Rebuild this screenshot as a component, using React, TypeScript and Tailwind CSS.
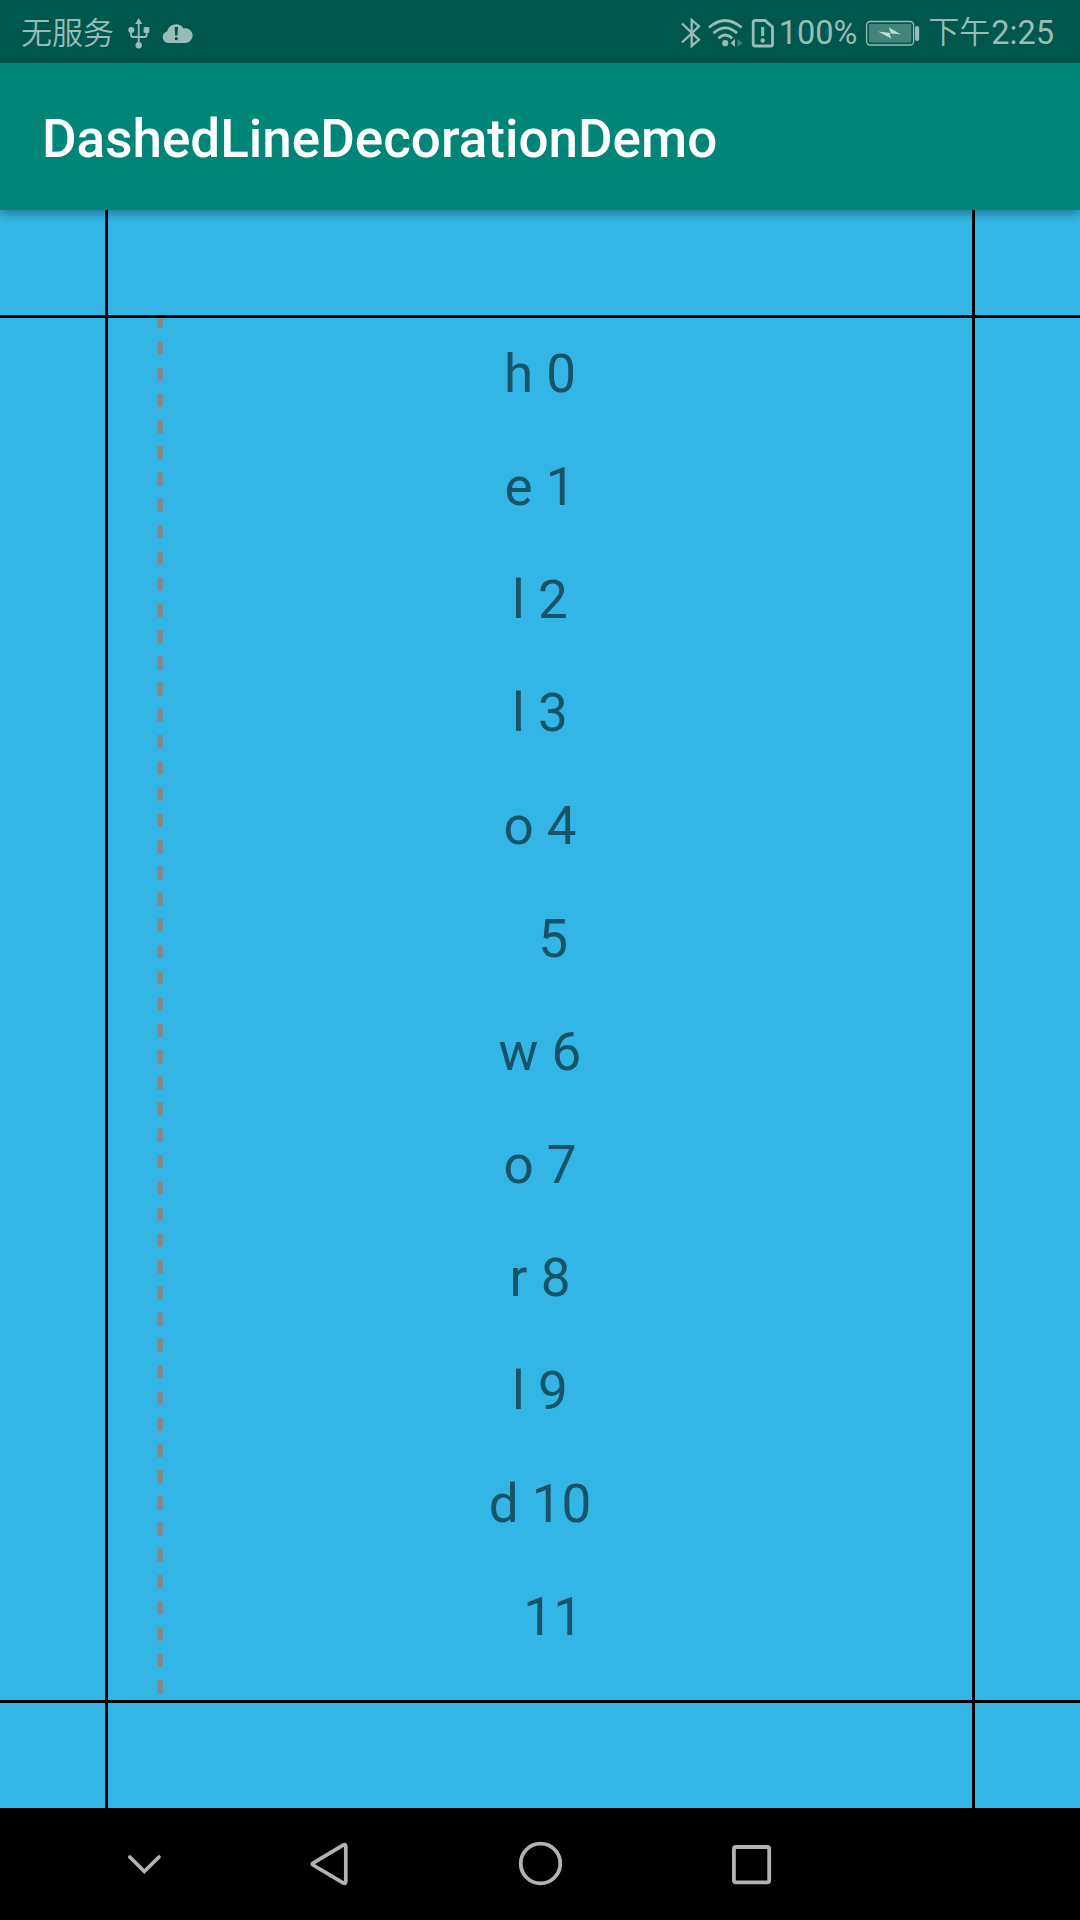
import React from "react";

const rows = ["h 0", "e 1", "l 2", "l 3", "o 4", "  5", "w 6", "o 7", "r 8", "l 9", "d 10", "  11"];

function UsbIcon() {
  return (
    <svg className="ml-[13px] h-[32px] w-[22px] shrink-0" viewBox="0 0 22 32" fill="none" stroke="currentColor" strokeWidth="1.8">
      <path d="M10.7 5v22M3 13.5v4.2q0 2.3 2.3 2.3h11q2.4 0 2.4-2.3v-4.2" />
      <g fill="currentColor" stroke="none">
        <path d="M10.7 1l3.6 6H7.1z" />
        <circle cx="3.3" cy="13" r="3" />
        <rect x="15.6" y="10" width="5.7" height="6" rx="1" />
        <circle cx="10.7" cy="28.2" r="3.2" />
      </g>
    </svg>
  );
}

function CloudIcon() {
  return (
    <svg className="ml-[12px] h-[22px] w-[32px] shrink-0" viewBox="0 0 32 22" fill="currentColor">
      <path d="M7 21a6 6 0 0 1-1.8-11.8A9 9 0 0 1 21.5 6.4 7.4 7.4 0 1 1 23.5 21z" />
      <path d="M12.6 5h3.4l-.5 8.5h-2.4z" fill="#00574b" />
      <circle cx="14.3" cy="16.7" r="1.6" fill="#00574b" />
    </svg>
  );
}

function BluetoothIcon() {
  return (
    <svg className="h-[32px] w-[20px] shrink-0" viewBox="0 0 20 32" fill="none" stroke="currentColor" strokeWidth="2.3">
      <path d="M1 6.5l17 16.3-7.3 6.2V3L18 9.3 1 25.5" />
    </svg>
  );
}

function WifiIcon() {
  return (
    <svg className="ml-[7px] h-[30px] w-[35px] shrink-0" viewBox="0 0 35 30" fill="none" stroke="currentColor" strokeWidth="2.8">
      <path d="M1 9.5q16-14 32.500 0M5.500 15.100q11.800-10.500 23.500 0M10.300 20.200q7-6.500 14 0" />
      <circle cx="17.200" cy="25.200" r="3.100" fill="currentColor" stroke="none" />
      <path d="M27 21v8l-4.500-4z" fill="currentColor" stroke="none" />
      <path d="M29.500 21v8l5-4z" fill="currentColor" opacity=".4" stroke="none" />
    </svg>
  );
}

function SimIcon() {
  return (
    <svg className="ml-[8px] h-[30px] w-[24px] shrink-0" viewBox="0 0 24 30" fill="none" stroke="currentColor">
      <path d="M4 2.500h10L21.500 9v17.300q0 1.700-1.700 1.700H4q-1.800 0-1.800-1.700V4.300Q2.200 2.500 4 2.500z" strokeWidth="2.800" />
      <path d="M11.700 9v9" strokeWidth="3" />
      <circle cx="11.700" cy="22.500" r="2.200" fill="currentColor" stroke="none" />
    </svg>
  );
}

function BatteryIcon() {
  return (
    <svg className="ml-[8px] h-[26px] w-[56px] shrink-0" viewBox="0 0 56 26">
      <rect x="1.600" y="1.500" width="47" height="23.500" rx="3.500" fill="none" stroke="currentColor" strokeWidth="1.300" />
      <rect x="4" y="4" width="42.300" height="18.500" rx="1" fill="#43857b" />
      <path d="M13 11.500l12.800 1.500-2-5.500L36 14.500l-11.500-1.300 1.800 5.500z" fill="#bfdcd7" />
      <rect x="50" y="6" width="4.200" height="15" rx="2" fill="currentColor" />
    </svg>
  );
}

function StatusBar() {
  return (
    <header className="flex h-[63px] items-center bg-[#00574b] pt-[3px] pr-[26px] pl-[21px] text-[31px] leading-[40px] font-[350] text-[#99bcb7]">
      <span className="mt-px w-[94px] shrink-0 whitespace-nowrap">无服务</span>
      <UsbIcon />
      <CloudIcon />
      <div className="ml-auto flex items-center whitespace-nowrap">
        <BluetoothIcon />
        <WifiIcon />
        <SimIcon />
        <span className="ml-[4px] text-[32.5px] font-normal">100%</span>
        <BatteryIcon />
        <span className="ml-[7px] flex">
          <span>下午</span>
          <span className="ml-px text-[32.5px] font-normal">2:25</span>
        </span>
      </div>
    </header>
  );
}

function DashedLine() {
  return (
    <svg className="absolute top-0 left-[49px] h-full w-[7px]">
      <line x1="3.1" y1="-3" x2="3.1" y2="1376" stroke="#888888" strokeWidth="5.5" strokeDasharray="13.125 13.125" />
    </svg>
  );
}

function NavigationBar() {
  return (
    <nav className="flex h-[112px] items-center bg-black pl-[122px] text-[#b3b3b3]">
      <svg className="h-[46px] w-[44px]" viewBox="0 0 44 46" fill="none" stroke="currentColor" strokeWidth="3.700" strokeLinecap="round">
        <path d="M7.800 16L22.300 30.500 37 16" />
      </svg>
      <svg className="ml-[141px] h-[46px] w-[44px]" viewBox="0 0 44 46" fill="none" stroke="currentColor" strokeWidth="3.700" strokeLinejoin="round">
        <path d="M6 22.200L36.500 3.900q2.300-1 2.300 1.500v35.200q0 2.500-2.300 1.500L6 24q-1.600-.9 0-1.800z" />
      </svg>
      <svg className="ml-[167px] h-[46px] w-[44px]" viewBox="0 0 44 46" fill="none" stroke="currentColor" strokeWidth="3.800">
        <circle cx="22.500" cy="22.500" r="19.800" />
      </svg>
      <svg className="ml-[167px] h-[46px] w-[44px]" viewBox="0 0 44 46" fill="none" stroke="currentColor" strokeWidth="3.800">
        <rect x="4.900" y="6" width="35.300" height="35.300" rx="2" />
      </svg>
    </nav>
  );
}

export default function App() {
  return (
    <div className="flex h-[1920px] w-[1080px] flex-col overflow-hidden bg-black font-['Roboto','Noto_Sans_CJK_SC',sans-serif]">
      <StatusBar />
      <div className="relative z-10 flex h-[147px] items-center bg-[#008577] pt-[5px] pl-[42px] shadow-[0_3px_10px_rgba(0,0,0,0.36)]">
        <h1 className="text-[53px] leading-[62px] font-medium text-white">DashedLineDecorationDemo</h1>
      </div>
      <main className="grid h-[1598px] grid-cols-[105px_864px_105px] grid-rows-[105px_1382px_105px] gap-[3px] bg-black">
        <div className="bg-[#33b5e5]" />
        <div className="bg-[#33b5e5]" />
        <div className="bg-[#33b5e5]" />
        <div className="bg-[#33b5e5]" />
        <section className="relative bg-[#33b5e5]">
          <DashedLine />
          <ul className="-mt-[3px]">
            {rows.map((label) => (
              <li key={label} className="flex h-[113px] items-center justify-center pt-[5px] text-[53px] leading-[62px] whitespace-pre text-[#185468]">
                {label}
              </li>
            ))}
          </ul>
        </section>
        <div className="bg-[#33b5e5]" />
        <div className="bg-[#33b5e5]" />
        <div className="bg-[#33b5e5]" />
        <div className="bg-[#33b5e5]" />
      </main>
      <NavigationBar />
    </div>
  );
}
